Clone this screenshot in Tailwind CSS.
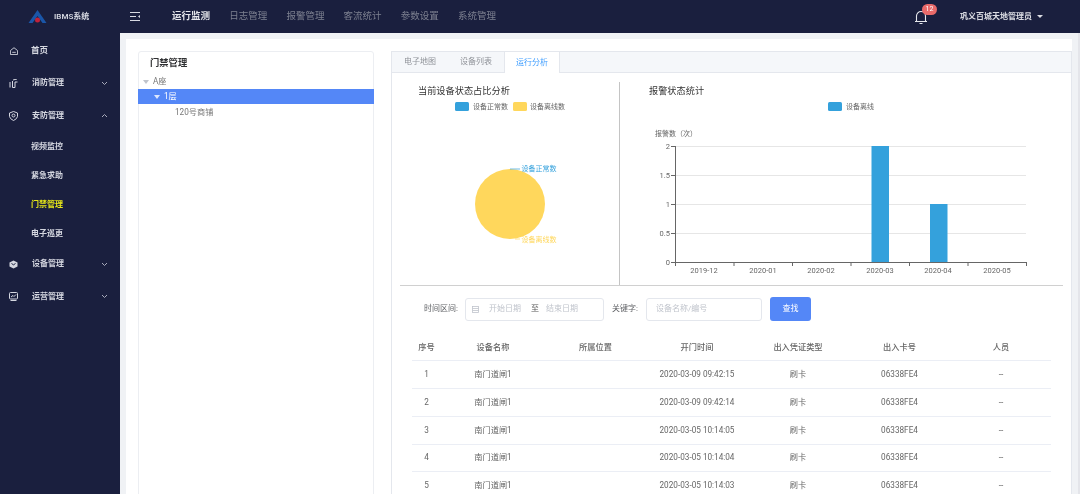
<!DOCTYPE html>
<html><head><meta charset="utf-8"><script src="https://cdn.jsdelivr.net/npm/@tailwindcss/browser@4"></script></head>
<body class="m-0">
<div class="w-[1080px] h-[494px] overflow-hidden bg-[#f0f2f5] flex flex-col font-['Roboto','Noto_Sans_CJK_SC',sans-serif] text-[#606266] blur-[0.3px]">
  <header class="h-[33px] shrink-0 bg-[#1a1f3e] flex items-center text-[9.5px]">
    <div class="w-[130px] flex items-center pl-[28px] gap-[7px]">
      <svg width="19" height="14" viewBox="0 0 18 14"><path d="M0 13 L9 0 L18 13 L14 13 L9 6 L4 13Z" fill="#1a56a8"/><circle cx="9" cy="10" r="2.500" fill="#c0223a"/></svg>
      <span class="text-[8px] text-[#d5d7e0] font-semibold whitespace-nowrap">IBMS系统</span>
    </div>
    <svg width="10" height="9" viewBox="0 0 10 9" fill="none" stroke="#d8dae2" stroke-width="1"><path d="M0 .5H10M0 4.500H6M0 8.500H10"/><path d="M10 3L8 4.500L10 6" fill="#d8dae2" stroke="none"/></svg>
    <nav class="flex ml-[32px] gap-[19.2px] text-[#7d8090] whitespace-nowrap">
      <span class="text-[#e6e7ec] font-bold">运行监测</span><span>日志管理</span><span>报警管理</span><span>客流统计</span><span>参数设置</span><span>系统管理</span>
    </nav>
    <div class="ml-auto relative mr-[32px]">
      <svg width="14" height="16" viewBox="0 0 14 16" fill="none" stroke="#e6e7ec" stroke-width="1.100"><path d="M1 12.500H13M2.500 12.500V7a4.500 4.500 0 0 1 9 0V12.500M5.500 14.500H8.500"/></svg>
      <span class="absolute -top-[5px] left-[8px] w-[15px] h-[11px] rounded-full bg-[#e96a6a] text-white text-[7px] flex items-center justify-center">12</span>
    </div>
    <span class="text-[8px] text-[#dcdde4] font-semibold whitespace-nowrap">巩义百城天地管理员</span>
    <span class="ml-[5px] mr-[37px] w-0 h-0 border-x-[3px] border-x-transparent border-t-[3px] border-t-[#dcdde4]"></span>
  </header>
  <div class="flex flex-1 min-h-0 pr-[2px] bg-[#e4e5ea]">
    <aside class="w-[120px] shrink-0 bg-[#1a1f3e] text-[#d5d7e0] text-[8px] font-semibold">
      <div class="h-[31px] mt-[2px] mb-[1px] flex items-center pl-[10px]"><svg width="8" height="8" viewBox="0 0 9 9" fill="none" stroke="#d5d7e0"><path d="M.5 4L4.500 .8L8.500 4V8.500H.5ZM2.500 6H6.500"/></svg><span class="ml-[13px] text-[8.5px]">首页</span></div>
      <div class="h-[32px] flex items-center pl-[9px]"><svg width="9" height="9" viewBox="0 0 9 9" fill="none" stroke="#d5d7e0"><path d="M1 3V8.500M3.500 2V8.500H6V3H8.500M4 1L8 0"/></svg><span class="ml-[14px]">消防管理</span><svg class="ml-auto mr-[12px]" width="7" height="5" viewBox="0 0 7 5" fill="none" stroke="#a9abbb"><path d="M1 1L3.500 3.500L6 1"/></svg></div>
      <div class="h-[33px] flex items-center pl-[9px]"><svg width="9" height="10" viewBox="0 0 9 10" fill="none" stroke="#d5d7e0"><path d="M4.500 .5L8.500 2V5.500Q8 8 4.500 9.500Q1 8 .5 5.500V2Z"/><circle cx="4.500" cy="4.500" r="1.500"/></svg><span class="ml-[14px]">安防管理</span><svg class="ml-auto mr-[12px]" width="7" height="5" viewBox="0 0 7 5" fill="none" stroke="#a9abbb"><path d="M1 4L3.500 1.500L6 4"/></svg></div>
      <div class="pl-[31px]">
        <div class="h-[29px] flex items-center">视频监控</div>
        <div class="h-[29px] flex items-center">紧急求助</div>
        <div class="h-[29px] flex items-center text-[#e6e619]">门禁管理</div>
        <div class="h-[29px] flex items-center">电子巡更</div>
      </div>
      <div class="h-[32px] flex items-center pl-[9px]"><svg width="9" height="9" viewBox="0 0 9 9"><path d="M4.500 .5L8.500 2.500V6.500L4.500 8.500L.5 6.500V2.500Z" fill="#d5d7e0"/><path d="M2.500 3.500L4.500 4.800L6.500 3.500" stroke="#1a1f3e" fill="none"/></svg><span class="ml-[14px]">设备管理</span><svg class="ml-auto mr-[12px]" width="7" height="5" viewBox="0 0 7 5" fill="none" stroke="#a9abbb"><path d="M1 1L3.500 3.500L6 1"/></svg></div>
      <div class="h-[33px] flex items-center pl-[9px]"><svg width="9" height="9" viewBox="0 0 9 9" fill="none" stroke="#d5d7e0"><rect x=".5" y=".5" width="8" height="6.500" rx="1"/><path d="M2 5L4 3.500L5 4.500L7 2.500M1.500 8.500H7.500"/></svg><span class="ml-[14px]">运营管理</span><svg class="ml-auto mr-[12px]" width="7" height="5" viewBox="0 0 7 5" fill="none" stroke="#a9abbb"><path d="M1 1L3.500 3.500L6 1"/></svg></div>
    </aside>
    <main class="flex-1 min-w-0 pl-[6px] pr-[6px] pt-[6px] bg-[#f0f2f5]">
      <div class="h-full bg-white flex pl-[12px] pt-[12px] gap-[17px]">
        <section class="w-[236px] shrink-0 h-[500px] border border-[#eceef2] rounded-[3px] bg-white">
          <h2 class="h-[22px] pl-[11px] pt-[4px] text-[9.3px] font-semibold text-[#303133]">门禁管理</h2>
          <div class="text-[8.2px] text-[#777]">
            <div class="h-[15px] flex items-center pl-[4px] gap-[4px]"><span class="w-0 h-0 border-x-[3px] border-x-transparent border-t-[4px] border-t-[#c0c4cc]"></span><span>A座</span></div>
            <div class="h-[15px] -mx-px flex items-center pl-[16px] gap-[4px] bg-[#5487f7] text-white"><span class="w-0 h-0 border-x-[3px] border-x-transparent border-t-[4px] border-t-white/80"></span><span>1层</span></div>
            <div class="h-[17px] flex items-center pl-[36px]">120号商铺</div>
          </div>
        </section>
        <section class="flex-1 min-w-0 h-[500px] border border-[#e4e7ed] bg-white">
          <div class="h-[21px] flex bg-[#f5f7fa] border-b border-[#e4e7ed] text-[8px] text-[#909399]">
            <span class="w-[56px] flex items-center justify-center">电子地图</span>
            <span class="w-[56px] flex items-center justify-center">设备列表</span>
            <span class="w-[56px] flex items-center justify-center bg-white text-[#409eff] border-x border-[#e4e7ed] h-[21px]">运行分析</span>
          </div>
          <div class="flex h-[213px] mx-[8px] border-b border-[#d0d0d0]">
            <div class="w-[220px] shrink-0 border-r border-[#c4c4c4] mt-[9px] relative">
              <h3 class="absolute left-[18px] top-[2px] text-[9.2px] text-[#333]">当前设备状态占比分析</h3>
              <svg class="block" width="219" height="203" viewBox="0 0 219 203">
                <rect x="55" y="20" width="14" height="9" rx="1.500" fill="#34a1dc"/><text x="73" y="27" font-size="7" fill="#666">设备正常数</text>
                <rect x="113" y="20" width="14" height="9" rx="1.500" fill="#ffd75c"/><text x="130" y="27" font-size="7" fill="#666">设备离线数</text>
                <circle cx="110" cy="122" r="35" fill="#ffd75c"/>
                <path d="M110 87H120" stroke="#34a1dc" stroke-width=".7" fill="none"/><path d="M115 157H120" stroke="#ffd75c" stroke-width=".7" fill="none"/>
                <text x="121.500" y="89" font-size="7" fill="#34a1dc">设备正常数</text><text x="121.500" y="159.500" font-size="7" fill="#ffd75c">设备离线数</text>
              </svg>
            </div>
            <div class="flex-1 relative mt-[9px]">
              <h3 class="absolute left-[29px] top-[2px] text-[9.2px] text-[#333]">报警状态统计</h3>
              <svg class="block" width="442" height="203" viewBox="620 82 442 203">
                <rect x="828" y="102" width="14" height="9" rx="1.500" fill="#34a1dc"/><text x="846" y="109" font-size="7" fill="#666">设备离线</text>
                <text x="655" y="136" font-size="7" fill="#666">报警数（次）</text>
                <g stroke="#e6e6e6" stroke-width="1"><path d="M675 146.500H1026M675 175.500H1026M675 204.500H1026M675 233.500H1026"/></g>
                <rect x="871.500" y="146" width="17.500" height="116" fill="#34a1dc"/><rect x="930" y="204" width="17.500" height="58" fill="#34a1dc"/>
                <path d="M675.500 146V262.500H1026.500M671 146.500H675M671 175.500H675M671 204.500H675M671 233.500H675M671 262.500H675M675.500 262V266M734 262V266M792.500 262V266M851 262V266M909.500 262V266M968 262V266M1026.500 262V266" stroke="#666" fill="none"/>
                <g font-size="7.500" fill="#666" text-anchor="end"><text x="670" y="149">2</text><text x="670" y="178">1.5</text><text x="670" y="207">1</text><text x="670" y="236">0.5</text><text x="670" y="265">0</text></g>
                <g font-size="7.500" fill="#666" text-anchor="middle"><text x="704" y="272.500">2019-12</text><text x="763" y="272.500">2020-01</text><text x="821" y="272.500">2020-02</text><text x="880" y="272.500">2020-03</text><text x="938" y="272.500">2020-04</text><text x="997" y="272.500">2020-05</text></g>
              </svg>
            </div>
          </div>
          <form class="flex items-center h-[24px] mt-[11px] pl-[32px] text-[8px] text-[#606266]">
            <label class="w-[41px]">时间区间:</label>
            <div class="w-[139px] h-[23px] border border-[#e4e7ed] rounded-[3px] flex items-center pl-[6px] text-[#c0c4cc]">
              <svg width="7" height="7" viewBox="0 0 7 7" fill="none" stroke="#c0c4cc" stroke-width=".8"><rect x=".5" y=".5" width="6" height="6"/><path d="M.5 2.500H6.500M.5 4.500H6.500"/></svg>
              <span class="ml-[10px]">开始日期</span><span class="ml-[10px] text-[#555]">至</span><span class="ml-[7px]">结束日期</span>
            </div>
            <label class="ml-[8px] w-[34px]">关键字:</label>
            <div class="w-[116px] h-[23px] border border-[#e4e7ed] rounded-[3px] flex items-center pl-[9px] text-[#c0c4cc]">设备名称/编号</div>
            <button type="button" class="ml-[8px] w-[41px] h-[24px] rounded-[3px] bg-[#5487f7] text-white text-[8px]">查找</button>
          </form>
          <table class="ml-[20px] mt-[11px] w-[639px] border-collapse table-fixed text-[8.2px] text-[#666] [&_th]:pt-[2px]">
            <thead><tr class="h-[28px] border-b border-[#ebeef5]"><th class="font-medium w-[29px]">序号</th><th class="font-medium w-[104px]">设备名称</th><th class="font-medium w-[101px]">所属位置</th><th class="font-medium w-[102px]">开门时间</th><th class="font-medium w-[100px]">出入凭证类型</th><th class="font-medium w-[103px]">出入卡号</th><th class="font-medium">人员</th></tr></thead>
            <tbody class="text-center">
              <tr class="h-[28px] border-b border-[#ebeef5]"><td>1</td><td>南门道闸1</td><td></td><td>2020-03-09 09:42:15</td><td>刷卡</td><td>06338FE4</td><td>--</td></tr>
              <tr class="h-[28px] border-b border-[#ebeef5]"><td>2</td><td>南门道闸1</td><td></td><td>2020-03-09 09:42:14</td><td>刷卡</td><td>06338FE4</td><td>--</td></tr>
              <tr class="h-[28px] border-b border-[#ebeef5]"><td>3</td><td>南门道闸1</td><td></td><td>2020-03-05 10:14:05</td><td>刷卡</td><td>06338FE4</td><td>--</td></tr>
              <tr class="h-[27px] border-b border-[#ebeef5]"><td>4</td><td>南门道闸1</td><td></td><td>2020-03-05 10:14:04</td><td>刷卡</td><td>06338FE4</td><td>--</td></tr>
              <tr class="h-[28px]"><td>5</td><td>南门道闸1</td><td></td><td>2020-03-05 10:14:03</td><td>刷卡</td><td>06338FE4</td><td>--</td></tr>
            </tbody>
          </table>
        </section>
      </div>
    </main>
  </div>
</div>
</body></html>
